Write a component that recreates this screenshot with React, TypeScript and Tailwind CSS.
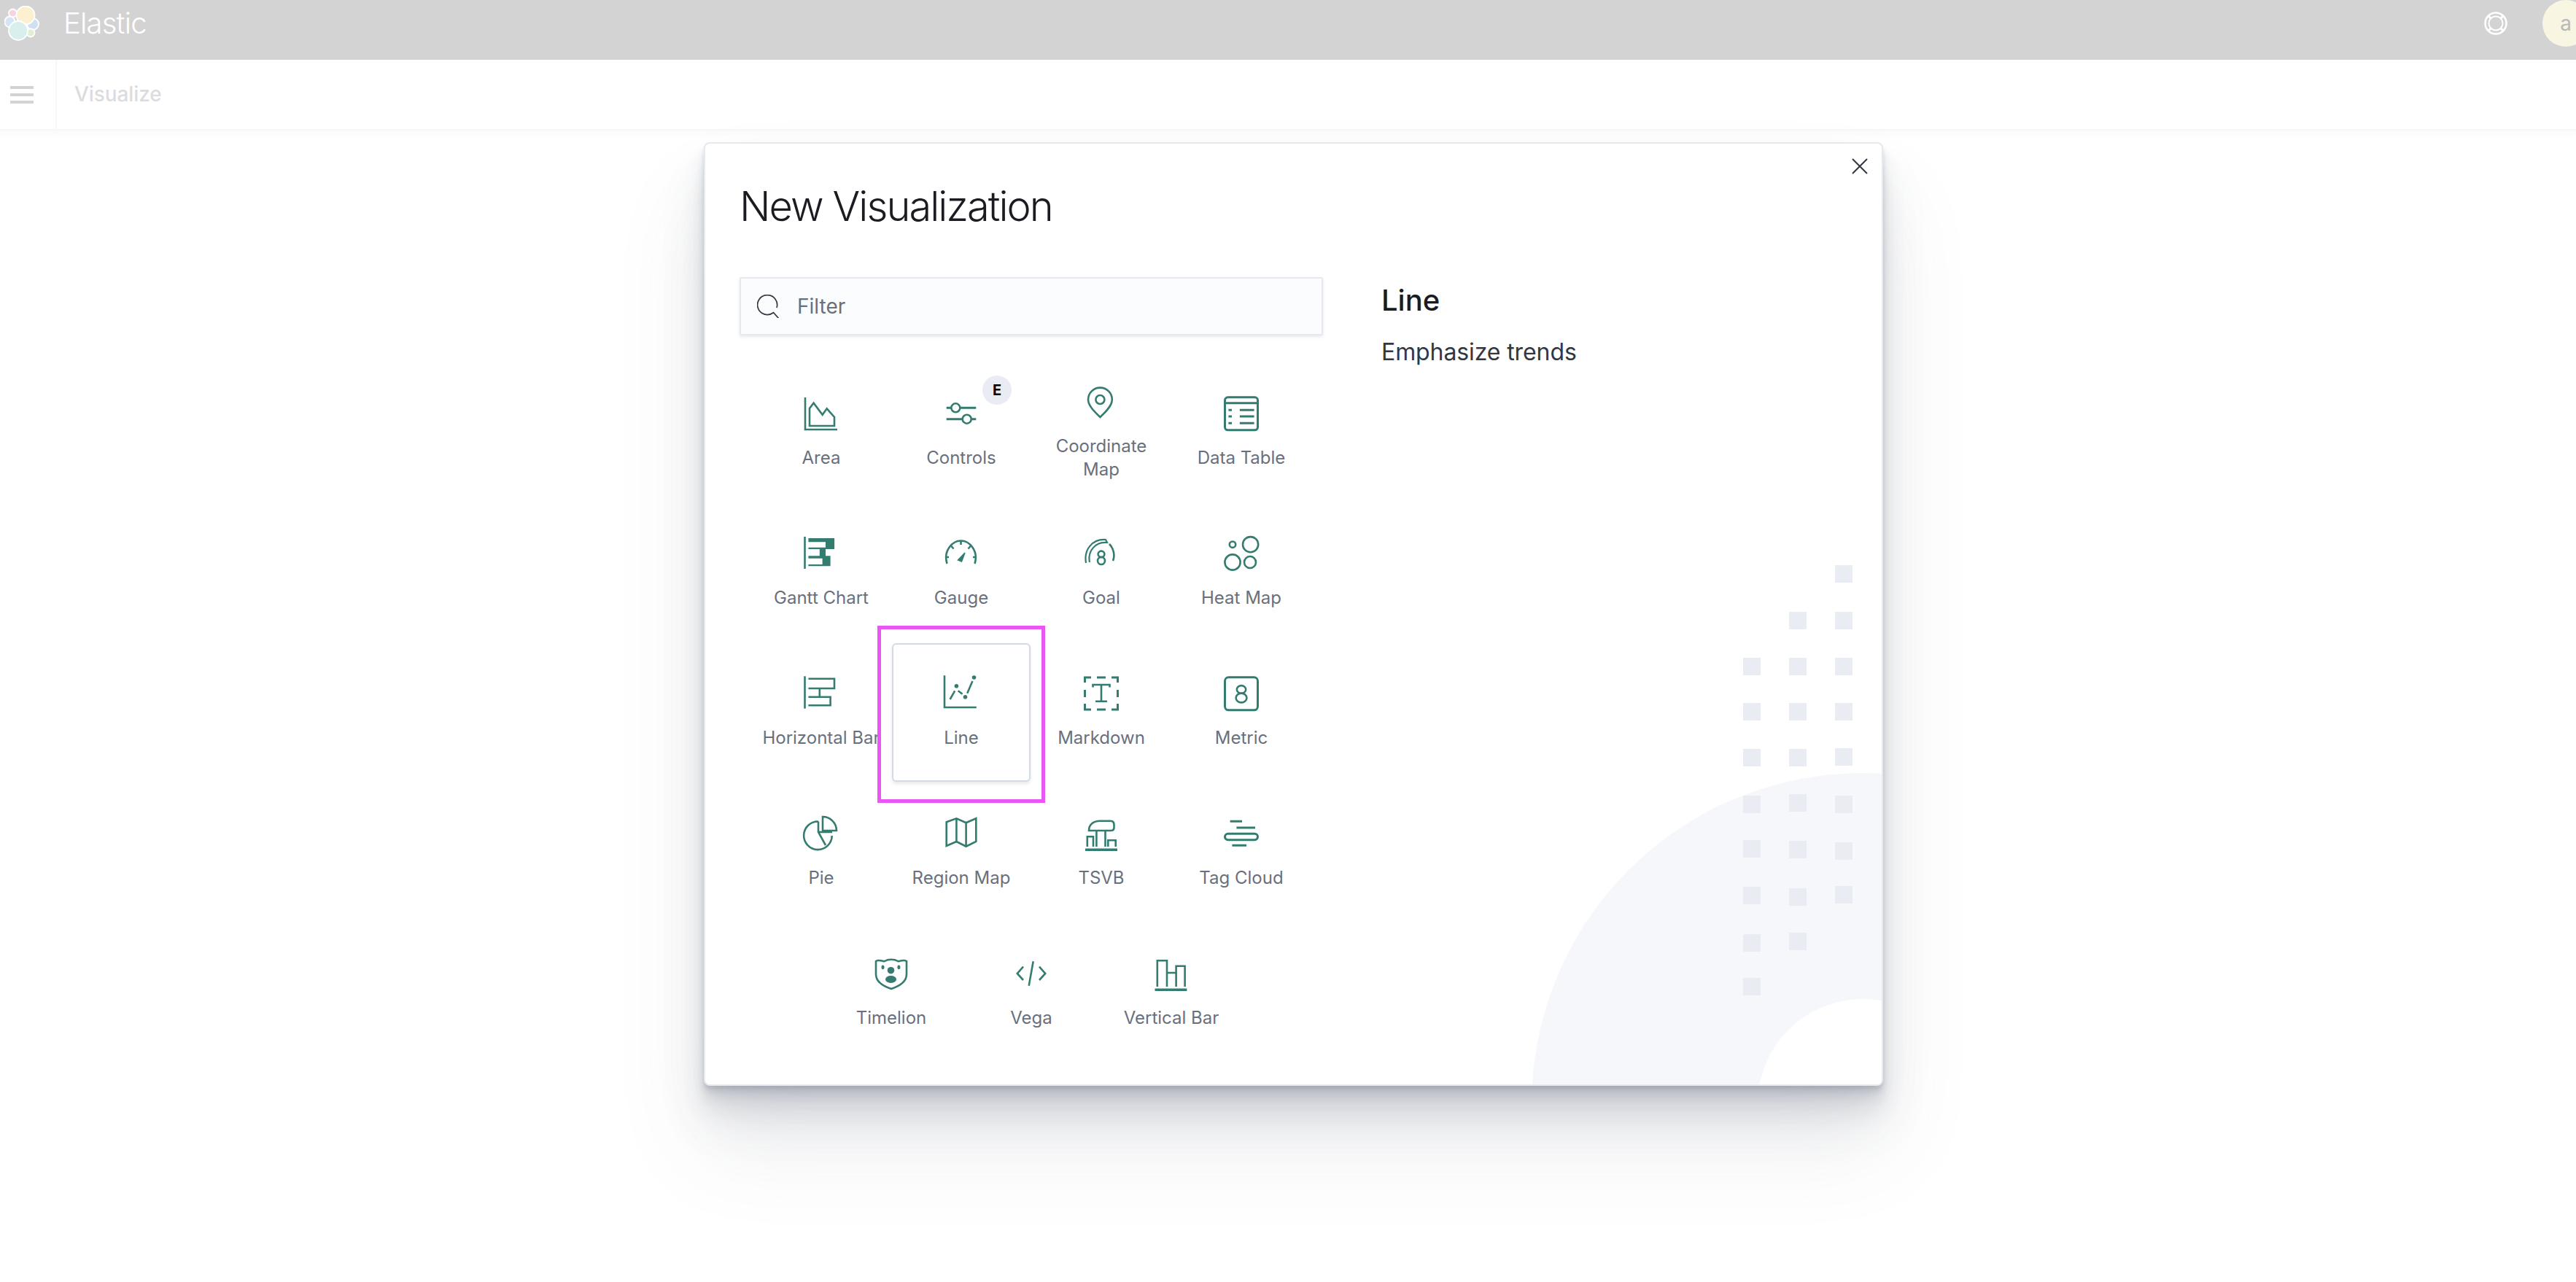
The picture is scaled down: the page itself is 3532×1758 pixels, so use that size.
import React from "react";
import clsx from "clsx";

// 48 unit box, strokes share the teal of the picture
const Ico = ({ children, className }: { children: React.ReactNode; className?: string }) => (
  <svg
    viewBox="0 0 48 48"
    fill="none"
    stroke="#357c70"
    strokeWidth={2.6}
    className={clsx("h-[48px] w-[48px] overflow-visible", className)}
  >
    {children}
  </svg>
);

const icons: Record<string, React.ReactNode> = {
  Area: (
    <>
      <path d="M2 1V45H46" />
      <path d="M8 40V16L13.6 8.7 25.7 24.7 31.7 16.3 42 28V40Z" />
    </>
  ),
  Controls: (
    <>
      <path d="M3.7 15.3H10.3M22.3 15.3H44.3M3.7 30.7H25.7M37.7 30.7H44.3" strokeWidth={3} />
      <circle cx="16.3" cy="15.3" r="6" />
      <circle cx="31.7" cy="30.7" r="6" />
    </>
  ),
  "Coordinate Map": (
    <>
      <path d="M22.4 44C14 36 6 28 6 20A16.4 16.4 0 0 1 38.8 20C38.8 28 31 36 22.4 44Z" />
      <circle cx="22.4" cy="20" r="6" />
    </>
  ),
  "Data Table": (
    <>
      <rect x="1.5" y="0.8" width="45" height="45" rx="4" strokeWidth={3} />
      <path
        d="M1.5 8.8H46.5M6.4 18.3H11M21.8 18.3H41.6M6.4 27H11M21.8 27H41.6M6.4 36.3H11M21.8 36.3H41.6"
        strokeWidth={3}
      />
    </>
  ),
  "Gantt Chart": (
    <>
      <path d="M1.5 0V44" />
      <path
        d="M6.4 2H42.1V17H6.4V14.7H30V7.3H6.4ZM21.8 17H30V26.3H36.6V40.3H6.4V38H25.6V29.7H6.4V26.3H21.8Z"
        fill="#357c70"
        stroke="none"
      />
    </>
  ),
  Gauge: (
    <>
      <path d="M4.5 37C-1 19 12 5.5 23.5 5.5C35 5.5 48 19 42.5 37" />
      <path d="M23.5 5.5V11M10 12.5L13.5 16.5M37 12.5L33.5 16.5M2 28H7M45 28H40" />
      <path d="M19.5 32L29 22 24.5 34Z" fill="#357c70" strokeWidth={1.5} />
    </>
  ),
  Goal: (
    <>
      <path d="M3 36C0 18 11 3 30 4L32 8C16 6 5 20 8 35" strokeWidth={2.2} />
      <path d="M35 10C41 16 43 26 40 33" />
      <ellipse cx="24" cy="23.8" rx="4.4" ry="4.2" />
      <ellipse cx="24" cy="33" rx="5" ry="5" />
    </>
  ),
  "Heat Map": (
    <>
      <circle cx="12" cy="10.7" r="4.2" />
      <circle cx="36.6" cy="10.7" r="10.6" />
      <circle cx="12" cy="35" r="10.6" />
      <circle cx="36" cy="35" r="8" />
    </>
  ),
  "Horizontal Bar": (
    <>
      <path d="M1.5 -0.7V43.7" />
      <path d="M6.4 2.7H42V16H6.4M21.8 16V27.7M6.4 27.7H36.6V39.3H6.4" />
    </>
  ),
  Line: (
    <>
      <path d="M1 -1.7V42H44.8" />
      <path d="M8.6 31L15.2 19.3M19.6 19.3L25.6 23.7M32.2 22.7L39.4 6" />
      <circle cx="17.4" cy="12.7" r="2.8" fill="#357c70" stroke="none" />
      <circle cx="29.5" cy="27.7" r="2.8" fill="#357c70" stroke="none" />
      <circle cx="41.5" cy="1" r="2.8" fill="#357c70" stroke="none" />
    </>
  ),
  Markdown: (
    <>
      <path
        d="M1.5 8V1H10M18 1H30M38 1H46.5V8M1.5 18V28M46.5 18V28M1.5 37V45H10M18 45H30M38 45H46.5V37"
        strokeWidth={3}
      />
      <path d="M12.5 14.5V11H35.5V14.5M24 11V33.7M16 33.7H32" />
    </>
  ),
  Metric: (
    <>
      <rect x="1.5" y="0.8" width="45" height="45" rx="5" strokeWidth={3} />
      <ellipse cx="24" cy="17.4" rx="6.2" ry="5.3" />
      <ellipse cx="24" cy="29" rx="7.4" ry="6.4" />
    </>
  ),
  Pie: (
    <>
      <path d="M26 0A19 19 0 0 1 45 19H26Z" />
      <path d="M20 6.5A19.3 19.3 0 1 0 38.7 26M20 6.5V21L30 39" />
      <path d="M21 21H39" />
    </>
  ),
  "Region Map": (
    <path d="M3.7 7.3L17.4 2.3 30.6 8.3 44.3 2.3V34L30.6 40.7 17.4 34 3.7 40ZM17.4 2.3V34M30.6 8.3V40.7" />
  ),
  TSVB: (
    <>
      <path d="M2 45.3H46" strokeWidth={3.5} />
      <path d="M7 19C7 10 14 5.7 22 5.7H36Q41.5 5.7 41.5 11V15Q41.5 19 37 19Z" />
      <path d="M17.4 19V41M29.5 19V41M4.8 41V27.3H13V41M33.3 41V32.3H43.7V41" />
    </>
  ),
  "Tag Cloud": (
    <>
      <path d="M8.6 6.3H25M17.4 15H43M11.4 39.3H31" strokeWidth={3} />
      <rect x="1.5" y="23.3" width="45" height="8.4" rx="4.2" strokeWidth={3} />
    </>
  ),
  Timelion: (
    <>
      <path d="M3 6C8 3 12 7 15 6C20 3 28 3 33 6C36 7 40 3 45 6V24C45 34 36 40 24 44C12 40 3 34 3 24Z" />
      <ellipse cx="12.5" cy="14.3" rx="2" ry="2.9" fill="#357c70" stroke="none" />
      <ellipse cx="34.4" cy="14.3" rx="2" ry="2.9" fill="#357c70" stroke="none" />
      <circle cx="23.5" cy="18.7" r="4.8" fill="#357c70" stroke="none" />
      <ellipse cx="23.5" cy="31" rx="7.5" ry="5" fill="#357c70" stroke="none" />
    </>
  ),
  Vega: <path d="M13 13.7L4.8 23 13 32M35 13.7L43.2 23 35 32M26.7 6.3L20.7 39.7" />,
  "Vertical Bar": (
    <>
      <path d="M1.5 45.3H45.4" strokeWidth={3.5} />
      <path d="M4.8 41V5.3H18V41M30.6 41V12.7H42.6V41M18 22H30.6" />
    </>
  ),
};

const filas = [
  ["Area", "Controls", "Coordinate Map", "Data Table"],
  ["Gantt Chart", "Gauge", "Goal", "Heat Map"],
  ["Horizontal Bar", "Line", "Markdown", "Metric"],
  ["Pie", "Region Map", "TSVB", "Tag Cloud"],
  ["Timelion", "Vega", "Vertical Bar"],
];

const Tile = ({ name }: { name: string }) => {
  const selected = name === "Line";
  return (
    <div className={clsx("relative h-[192px] w-[192px]", selected && "z-10")}>
      {selected && (
        <>
          <div className="absolute -top-[23px] -right-[19px] -bottom-[28px] -left-[19px] border-[5px] border-[#ea55f5] bg-white" />
          <div className="absolute inset-[1px] rounded-[6px] border-2 border-[#d3dae6] bg-white shadow-[0_3px_4px_rgba(65,78,101,0.12)]" />
        </>
      )}
      <div className="relative flex h-full w-full flex-col items-center justify-center pt-[2px]">
        <div className="mb-[20px]">
          <Ico>{icons[name]}</Ico>
        </div>
        <div className="w-[156px] text-center text-[24px] leading-[32px] font-normal text-[#69707d]">
          {name === "Horizontal Bar" ? <span className="-mx-[10px] block whitespace-nowrap">{name}</span> : name}
        </div>
      </div>
      {name === "Controls" && (
        <span className="absolute top-[18px] right-[27px] flex h-[40px] w-[40px] items-center justify-center rounded-full bg-[#e9edf3] text-[20px] font-bold text-black">
          E
        </span>
      )}
    </div>
  );
};

const col1 = [903, 965, 1028, 1092, 1153, 1217, 1282, 1342];
const col2 = [840, 903, 965, 1028, 1090, 1154, 1219, 1280];
const col3 = [776, 840, 903, 965, 1027, 1092, 1156, 1216];

const Decoration = () => (
  <svg viewBox="2000 760 582 728" className="absolute right-0 bottom-0 h-[728px] w-[582px]">
    <circle cx="2556" cy="1515" r="454" fill="#f5f7fa" />
    <circle cx="2556" cy="1515" r="144" fill="#fff" />
    {col1.map((y) => (
      <rect key={y} x="2392" y={y} width="24" height="24" fill="#e9ecf2" />
    ))}
    {col2.map((y) => (
      <rect key={y} x="2455" y={y} width="24" height="24" fill="#e9ecf2" />
    ))}
    {col3.map((y) => (
      <rect key={y} x="2518" y={y} width="24" height="24" fill="#e9ecf2" />
    ))}
  </svg>
);

const Logo = () => (
  <svg viewBox="0 0 48 48" className="h-[48px] w-[48px]" stroke="#fff" strokeWidth={1.8}>
    <circle cx="11.5" cy="10" r="5.5" fill="#f5d5e5" />
    <ellipse cx="7.5" cy="22" rx="7" ry="7.5" fill="#d5e5f8" />
    <ellipse cx="39" cy="25" rx="8" ry="8" fill="#cfe0f3" />
    <circle cx="36" cy="37" r="5.5" fill="#e2eecf" />
    <ellipse cx="29" cy="13" rx="12.5" ry="12.5" fill="#fdf0d0" />
    <circle cx="19" cy="34" r="13" fill="#d8efed" />
  </svg>
);

const Help = () => (
  <svg viewBox="0 0 32 32" className="h-[32px] w-[32px]" fill="none" stroke="#fff">
    <circle cx="16" cy="16" r="14.5" strokeWidth={2.6} />
    <circle cx="16" cy="16" r="9.5" strokeWidth={2} />
    <path d="M6 6L9.5 9.5M26 6L22.5 9.5M6 26L9.5 22.5M26 26L22.5 22.5" strokeWidth={3} />
  </svg>
);

const App: React.FC = () => {
  return (
    <div className="relative flex h-[1758px] w-full flex-col overflow-hidden bg-white font-[Inter,sans-serif]">
      {/* barra superior */}
      <header className="flex h-[82px] items-start bg-[#d3d3d3]">
        <div className="flex h-[64px] w-full items-center">
          <div className="ml-[6px]">
            <Logo />
          </div>
          <span className="ml-[33px] text-[40px] leading-none font-light tracking-[-0.8px] text-white">Elastic</span>
          <div className="ml-auto">
            <Help />
          </div>
          <div className="-mr-[18px] ml-[48px] flex h-[64px] w-[64px] items-center justify-center rounded-full bg-[#f8f5e3] text-[28px] text-[#b9b9b9]">
            a
          </div>
        </div>
      </header>

      <nav className="flex h-[97px] items-stretch border-b-2 border-[#f5f7fa] shadow-[0_4px_8px_rgba(65,78,101,0.03)]">
        <div className="flex w-[78px] items-center border-r-2 border-[#f5f7fa] pl-[14px]">
          <div className="flex w-[32px] flex-col gap-[6px]">
            <div className="h-[4px] bg-[#d3d3d6]" />
            <div className="h-[4px] bg-[#d3d3d6]" />
            <div className="h-[4px] bg-[#d3d3d6]" />
          </div>
        </div>
        <div className="flex items-center pb-[2px] pl-[24px] text-[28px] font-medium tracking-[-0.1px] text-[#dcdcdf]">
          Visualize
        </div>
      </nav>

      {/* modal */}
      <div className="pt-[16px] pl-[965px]">
        <div className="relative w-[1617px] overflow-hidden rounded-[8px] border-2 border-[#e6e9ef] bg-white pt-[44px] pr-[48px] pb-[30px] pl-[47px] shadow-[0_80px_128px_rgba(65,78,101,0.1),0_48px_64px_rgba(65,78,101,0.1),0_32px_32px_rgba(65,78,101,0.1),0_16px_16px_rgba(65,78,101,0.1),0_8px_8px_rgba(65,78,101,0.1),0_4px_4px_rgba(65,78,101,0.1)]">
          <Decoration />
          <button className="absolute top-[20px] right-[19px] h-[22px] w-[22px]">
            <svg viewBox="0 0 22 22" fill="none" stroke="#343741" strokeWidth={2} className="h-[22px] w-[22px]">
              <path d="M1 1L21 21M21 1L1 21" />
            </svg>
          </button>
          <h1 className="h-[84px] text-[56px] leading-[84px] font-light tracking-[-1.95px] text-[#1a1c21]">
            New Visualization
          </h1>
          <div className="relative mt-[55px] flex gap-[80px]">
            <div className="w-[800px]">
              <div className="flex h-[80px] items-center rounded-[2px] border-2 border-[#e6e9ef] bg-[#fbfcfd] pl-[22px] shadow-[0_2px_4px_rgba(65,78,101,0.12)]">
                <svg viewBox="0 0 32 32" fill="none" stroke="#343741" strokeWidth={1.7} className="h-[32px] w-[32px]">
                  <path d="M22 25A13.5 13.5 0 1 1 27 18M22 24L30 33" />
                </svg>
                <span className="ml-[23px] text-[28px] text-[#69707d]">Filter</span>
              </div>
              <div className="mt-[37px] flex flex-wrap justify-center">
                {filas.flat().map((name) => (
                  <Tile key={name} name={name} />
                ))}
              </div>
            </div>
            <div className="pt-[8px]">
              <h2 className="text-[40px] leading-[48px] font-medium text-[#1a1c21]">Line</h2>
              <p className="mt-[23px] text-[32px] leading-[48px] tracking-[-0.1px] text-[#343741]">Emphasize trends</p>
            </div>
          </div>
        </div>
      </div>
    </div>
  );
};

export default App;
